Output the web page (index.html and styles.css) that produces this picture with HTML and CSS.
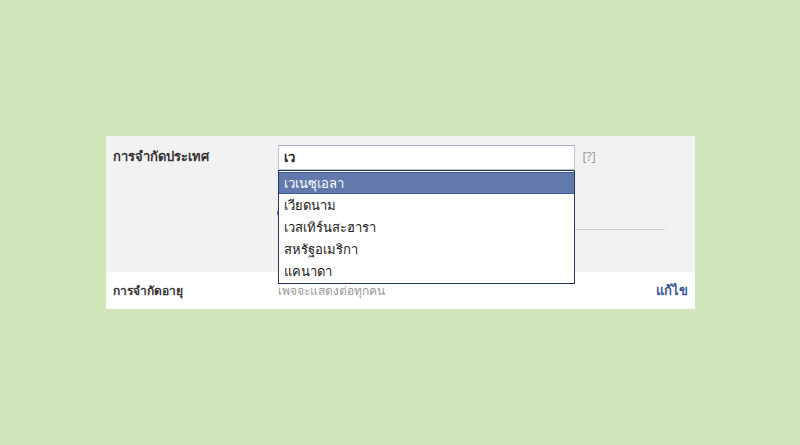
FILE: index.html
```html
<!DOCTYPE html>
<html lang="th">
<head>
    <meta charset="UTF-8">
    <title>การจำกัดประเทศ</title>
    <link rel="stylesheet" href="styles.css">
</head>
<body>
    <div class="panel">
        <div class="row row-gray">
            <div class="label">การจำกัดประเทศ</div>
            <div class="field">
                <input class="country-input" type="text" value="เว">
                <div class="field-body">
                    <span class="radio"></span>
                    <div class="rule"></div>
                </div>
                <ul class="suggest">
                    <li class="active">เวเนซุเอลา</li>
                    <li>เวียดนาม</li>
                    <li>เวสเทิร์นสะฮารา</li>
                    <li>สหรัฐอเมริกา</li>
                    <li>แคนาดา</li>
                </ul>
            </div>
            <a class="help" href="#">[?]</a>
        </div>
        <div class="row row-white">
            <div class="label">การจำกัดอายุ</div>
            <div class="value">เพจจะแสดงต่อทุกคน</div>
            <a class="edit" href="#">แก้ไข</a>
        </div>
    </div>
</body>
</html>
```

FILE: styles.css
```css
* {
    margin: 0;
    padding: 0;
    box-sizing: border-box;
}
html, body {
    height: 100%;
}
body {
    font-family: Tahoma, "Noto Sans", "DejaVu Sans", sans-serif;
    font-size: 13px;
    color: #333;
    background-color: #d2e6bc;
    display: flex;
    align-items: center;
    justify-content: center;
}
.panel {
    width: 589px;
    background: #fff;
}
.row {
    display: flex;
    padding: 0 7px;
}
.row-gray {
    height: 136px;
    background: #f2f2f2;
    padding-top: 9px;
}
.row-white {
    height: 37px;
    align-items: center;
}
.label {
    width: 165px;
    font-weight: bold;
    color: #333;
}
.row-gray .label {
    padding-top: 1px;
}
.row-white .label {
    font-size: 12px;
}
.field {
    width: 297px;
    position: relative;
}
.country-input {
    width: 100%;
    height: 25px;
    padding: 0 5px;
    border: 1px solid #bdc7d8;
    border-top-color: #a9b1c0;
    font-family: inherit;
    font-size: 13px;
    font-weight: bold;
    color: #222;
    background: #fff;
    outline: none;
}
.field-body {
    position: relative;
    height: 80px;
}
.radio {
    position: absolute;
    left: -1px;
    top: 37px;
    width: 12px;
    height: 12px;
    border-radius: 50%;
    border: 1px solid #4a6bb0;
    background: #fff;
}
.rule {
    position: absolute;
    left: 0;
    top: 59px;
    width: 387px;
    height: 1px;
    background: #cfcfcf;
}
.suggest {
    position: absolute;
    left: 0;
    top: 25px;
    width: 297px;
    list-style: none;
    background: #fff;
    border: 1px solid #26355a;
    padding: 1px 0 1px;
    z-index: 2;
}
.suggest li {
    height: 22px;
    line-height: 22px;
    padding: 0 5px;
    font-size: 13px;
    font-weight: 500;
    color: #1a1a1a;
}
.suggest li.active {
    background: #6279ad;
    color: #fff;
    border-top: 1px solid #3b5998;
    border-bottom: 1px solid #3b5998;
    line-height: 20px;
}
.help {
    margin-left: 8px;
    padding-top: 3px;
    font-size: 12px;
    color: #999;
    text-decoration: none;
}
.value {
    flex: 1;
    font-size: 12px;
    color: #999;
}
.edit {
    font-weight: bold;
    color: #3b5998;
    text-decoration: none;
}
```
